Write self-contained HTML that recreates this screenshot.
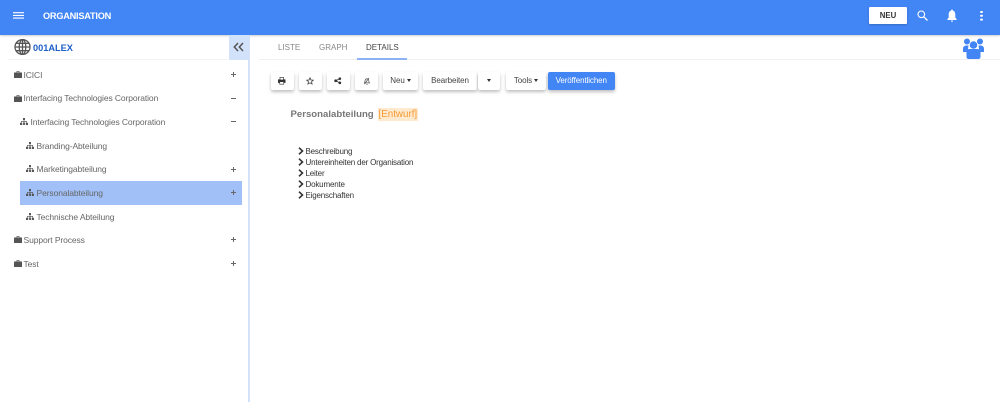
<!DOCTYPE html>
<html lang="de"><head><meta charset="utf-8"><title>Organisation</title>
<style>
html,body{margin:0;padding:0;width:1000px;height:402px;overflow:hidden;background:#fff;font-family:"Liberation Sans",sans-serif}
.a{position:absolute;white-space:nowrap}
.t{font-size:8.5px;letter-spacing:-.1px;color:#666;line-height:12px}
.pm{position:absolute;left:231px;width:5px;height:5px}
.pm:before{content:"";position:absolute;left:0;top:2px;width:5px;height:1px;background:#666}
.pm.p:after{content:"";position:absolute;left:2px;top:0;width:1px;height:5px;background:#666}
.btn{position:absolute;top:72px;height:17.500px;background:#fff;border-radius:2px;box-shadow:0 2px 3px rgba(0,0,0,.25);font-size:8px;letter-spacing:-.1px;line-height:17.500px;color:#444;text-align:center}
.car{display:inline-block;width:0;height:0;border:2.500px solid transparent;border-top:3px solid #333;border-bottom:0;vertical-align:1.500px;margin-left:2px}
.l{font-size:8px;letter-spacing:-.18px;color:#333;line-height:11px;left:305.500px}
svg{position:absolute;display:block}
</style></head><body>
<div class="a" style="left:0;top:0;width:1000px;height:35px;background:#4285f4;box-shadow:0 1px 2px rgba(0,0,0,.2)"></div>
<svg style="left:13px;top:11px" width="11" height="9" viewBox="0 0 11 9"><path d="M0 1.700h11M0 4.400h11M0 7.100h11" stroke="#fff" stroke-width="1.100"/></svg>
<div class="a" style="left:43px;top:9px;font-size:9.200px;letter-spacing:-.23px;font-weight:bold;color:#fff;line-height:14px">ORGANISATION</div>
<div class="a" style="left:869px;top:7px;width:38px;height:17px;background:#fff;border-radius:1px;font-size:7.800px;font-weight:bold;color:#333;line-height:17px;text-align:center;box-shadow:0 1px 2px rgba(0,0,0,.2)">NEU</div>
<svg style="left:917px;top:10px" width="11" height="11" viewBox="0 0 11 11"><circle cx="4.300" cy="4.300" r="3.300" fill="none" stroke="#fff" stroke-width="1.100"/><path d="M6.800 6.800l3.700 3.700" stroke="#fff" stroke-width="1.300"/></svg>
<svg style="left:946.500px;top:9px" width="10" height="13" viewBox="0 0 10 13"><path d="M5 0.500c.6 0 .9.500.9 1.100 1.800.5 2.400 2 2.400 4V8.500l1.300 1.600V11H.4v-.9l1.300-1.600V5.600c0-2 .6-3.500 2.400-4 0-.6.3-1.100.9-1.100zM3.800 11.600h2.400A1.200 1.200 0 0 1 3.800 11.600z" fill="#fff"/></svg>
<div class="a" style="left:980px;top:11px;width:2.500px;height:2.400px;border-radius:50%;background:#fff;box-shadow:0 3.800px 0 #fff,0 7.600px 0 #fff"></div>

<!-- sidebar -->
<div class="a" style="left:248px;top:35px;width:2px;height:367px;background:#d3e2fb"></div>
<div class="a" style="left:229px;top:35px;width:20px;height:25px;background:#d2e2fb"></div>
<svg style="left:233px;top:42px" width="11" height="10" viewBox="0 0 11 10"><path d="M5 1L1.300 5 5 9M10 1L6.300 5 10 9" fill="none" stroke="#555" stroke-width="1.500"/></svg>
<div class="a" style="left:8px;top:59px;width:219px;height:1px;background:#f2f2f2"></div>
<svg style="left:14px;top:39px" width="17" height="16" viewBox="0 0 17 16"><g fill="none" stroke="#555" stroke-width="1.300"><ellipse cx="8.500" cy="8" rx="7.500" ry="7.400"/><ellipse cx="8.500" cy="8" rx="3.300" ry="7.400"/><path d="M8.500 .6v14.800M1 8h15M2 4.300h13M2 11.700h13"/></g></svg>
<div class="a" style="left:33px;top:40.500px;font-size:9.200px;font-weight:bold;color:#1d5fc9;line-height:14px">001ALEX</div>

<div class="a" style="left:20px;top:181px;width:222px;height:24px;background:#a0c0f7"></div>

<svg style="left:14px;top:71px" width="8" height="7" viewBox="0 0 8 7"><path d="M0 1.500h2.500V.3h3v1.200H8V7H0zM3.200 1v.5h1.600V1z" fill="#555" fill-rule="evenodd"/></svg>
<div class="a t" style="left:23.500px;top:69px">ICICI</div><div class="pm p" style="top:72px"></div>
<svg style="left:14px;top:95px" width="8" height="7" viewBox="0 0 8 7"><path d="M0 1.500h2.500V.3h3v1.200H8V7H0zM3.200 1v.5h1.600V1z" fill="#555" fill-rule="evenodd"/></svg>
<div class="a t" style="left:23.500px;top:92px">Interfacing Technologies Corporation</div><div class="pm" style="top:96px"></div>
<svg style="left:20px;top:118px" width="8" height="7" viewBox="0 0 8 7"><path d="M3 0h2v2H4.300v1H7v1.800h1V7H5.800V4.800h.7V3.600h-2v1.200h.4V7H3.100V4.800h.4V3.600h-2v1.200h.7V7H0V4.800h1V3h2.700V2H3z" fill="#555"/></svg>
<div class="a t" style="left:30.500px;top:115.500px">Interfacing Technologies Corporation</div><div class="pm" style="top:119px"></div>
<svg style="left:26px;top:142px" width="8" height="7" viewBox="0 0 8 7"><path d="M3 0h2v2H4.300v1H7v1.800h1V7H5.800V4.800h.7V3.600h-2v1.200h.4V7H3.100V4.800h.4V3.600h-2v1.200h.7V7H0V4.800h1V3h2.700V2H3z" fill="#555"/></svg>
<div class="a t" style="left:36.500px;top:139.500px">Branding-Abteilung</div>
<svg style="left:26px;top:165px" width="8" height="7" viewBox="0 0 8 7"><path d="M3 0h2v2H4.300v1H7v1.800h1V7H5.800V4.800h.7V3.600h-2v1.200h.4V7H3.100V4.800h.4V3.600h-2v1.200h.7V7H0V4.800h1V3h2.700V2H3z" fill="#555"/></svg>
<div class="a t" style="left:36.500px;top:163px">Marketingabteilung</div><div class="pm p" style="top:167px"></div>
<svg style="left:26px;top:189px" width="8" height="7" viewBox="0 0 8 7"><path d="M3 0h2v2H4.300v1H7v1.800h1V7H5.800V4.800h.7V3.600h-2v1.200h.4V7H3.100V4.800h.4V3.600h-2v1.200h.7V7H0V4.800h1V3h2.700V2H3z" fill="#555"/></svg>
<div class="a t" style="left:36.500px;top:186.500px">Personalabteilung</div><div class="pm p" style="top:190px"></div>
<svg style="left:26px;top:213px" width="8" height="7" viewBox="0 0 8 7"><path d="M3 0h2v2H4.300v1H7v1.800h1V7H5.800V4.800h.7V3.600h-2v1.200h.4V7H3.100V4.800h.4V3.600h-2v1.200h.7V7H0V4.800h1V3h2.700V2H3z" fill="#555"/></svg>
<div class="a t" style="left:36.500px;top:210.500px">Technische Abteilung</div>
<svg style="left:14px;top:236px" width="8" height="7" viewBox="0 0 8 7"><path d="M0 1.500h2.500V.3h3v1.200H8V7H0zM3.200 1v.5h1.600V1z" fill="#555" fill-rule="evenodd"/></svg>
<div class="a t" style="left:23.500px;top:234px">Support Process</div><div class="pm p" style="top:237px"></div>
<svg style="left:14px;top:260px" width="8" height="7" viewBox="0 0 8 7"><path d="M0 1.500h2.500V.3h3v1.200H8V7H0zM3.200 1v.5h1.600V1z" fill="#555" fill-rule="evenodd"/></svg>
<div class="a t" style="left:23.500px;top:257.500px">Test</div><div class="pm p" style="top:261px"></div>

<!-- tabs -->
<div class="a" style="left:259px;top:59px;width:741px;height:1px;background:#f0f0f0"></div>
<div class="a" style="left:357px;top:58px;width:50px;height:2px;background:#8db2f5"></div>
<div class="a" style="left:278px;top:42px;font-size:8px;color:#888;line-height:12px">LISTE</div>
<div class="a" style="left:319px;top:42px;font-size:8px;color:#888;line-height:12px">GRAPH</div>
<div class="a" style="left:366px;top:42px;font-size:8px;color:#444;line-height:12px">DETAILS</div>
<svg style="left:963px;top:38px" width="21" height="21" viewBox="0 0 21 21"><g fill="#4285f4"><circle cx="4" cy="3.500" r="3"/><circle cx="17" cy="3.500" r="3"/><circle cx="10.500" cy="7" r="3.800"/><path d="M0 14v-3C0 8.500 1.500 7.500 3.500 7.500h2L5 11l-.5 3zM21 14v-3c0-2.500-1.500-3.500-3.500-3.500h-2l.5 3.500.5 3z"/><path d="M3.500 19c0 1 .8 2 2 2h10c1.200 0 2-1 2-2v-5c0-2-1.500-3-3-3h-8c-1.500 0-3 1-3 3z"/></g></svg>

<!-- toolbar -->
<div class="btn" style="left:271px;width:23px"></div>
<svg style="left:278px;top:77px" width="7.500" height="7.500" viewBox="0 0 9 9"><path d="M2 0h5v2.800h1.500a.5.5 0 0 1 .5.500V7H7.300v2H1.700V7H0V3.300a.5.5 0 0 1 .5-.5H2zM2.800.8v2.400h3.400V.8zM2.500 6v2.200h4V6z" fill="#333" fill-rule="evenodd"/></svg>
<div class="btn" style="left:299px;width:23px"></div>
<svg style="left:305.500px;top:76.500px" width="8" height="8" viewBox="0 0 10 10"><path d="M5 1l1.200 2.700 2.900.3-2.200 1.900.7 2.900L5 7.300 2.400 8.800l.7-2.900L.9 4l2.900-.3z" fill="none" stroke="#444" stroke-width="1"/></svg>
<div class="btn" style="left:327px;width:23px"></div>
<svg style="left:334px;top:77px" width="7.500" height="7.500" viewBox="0 0 9 9"><circle cx="2" cy="4.500" r="1.700" fill="#333"/><circle cx="7" cy="2" r="1.600" fill="#333"/><circle cx="7" cy="7" r="1.600" fill="#333"/><path d="M2 4.500L7 2M2 4.500L7 7" stroke="#333"/></svg>
<div class="btn" style="left:355px;width:23px"></div>
<svg style="left:361.500px;top:76.500px" width="9" height="8.500" viewBox="0 0 11 10"><path d="M3 8.500L8.500 1M5.500 9.200c.6 0 1-.3 1-.7M3 7c.6-1 .6-2 .8-3C4 2.800 5 2 6 2c1.500 0 2.300 1 2.300 2.400 0 1.200.2 2 .9 2.600z" fill="none" stroke="#555" stroke-width=".9"/></svg>
<div class="btn" style="left:383px;width:35px">Neu<span class="car"></span></div>
<div class="btn" style="left:423px;width:54px">Bearbeiten</div>
<div class="btn" style="left:478px;width:22px"><span class="car" style="margin:0"></span></div>
<div class="btn" style="left:506px;width:40px">Tools<span class="car"></span></div>
<div class="btn" style="left:548px;width:66.500px;background:#4285f4;color:#fff">Veröffentlichen</div>

<div class="a" style="left:290.500px;top:107.500px;font-size:9.600px;font-weight:bold;color:#777;line-height:14px">Personalabteilung</div>
<div class="a" style="left:378px;top:108px;height:13px;padding:0 .5px;font-size:9.800px;color:#f59a32;background:#ffe9cf;line-height:13px">[Entwurf]</div>

<svg style="left:298px;top:147px" width="6" height="8" viewBox="0 0 6 8"><path d="M1 .7L4.500 4 1 7.300" fill="none" stroke="#333" stroke-width="1.600"/></svg>
<div class="a l" style="top:146px">Beschreibung</div>
<svg style="left:298px;top:158px" width="6" height="8" viewBox="0 0 6 8"><path d="M1 .7L4.500 4 1 7.300" fill="none" stroke="#333" stroke-width="1.600"/></svg>
<div class="a l" style="top:157px">Untereinheiten der Organisation</div>
<svg style="left:298px;top:169px" width="6" height="8" viewBox="0 0 6 8"><path d="M1 .7L4.500 4 1 7.300" fill="none" stroke="#333" stroke-width="1.600"/></svg>
<div class="a l" style="top:168px">Leiter</div>
<svg style="left:298px;top:180px" width="6" height="8" viewBox="0 0 6 8"><path d="M1 .7L4.500 4 1 7.300" fill="none" stroke="#333" stroke-width="1.600"/></svg>
<div class="a l" style="top:179px">Dokumente</div>
<svg style="left:298px;top:191px" width="6" height="8" viewBox="0 0 6 8"><path d="M1 .7L4.500 4 1 7.300" fill="none" stroke="#333" stroke-width="1.600"/></svg>
<div class="a l" style="top:190px">Eigenschaften</div>
</body></html>
